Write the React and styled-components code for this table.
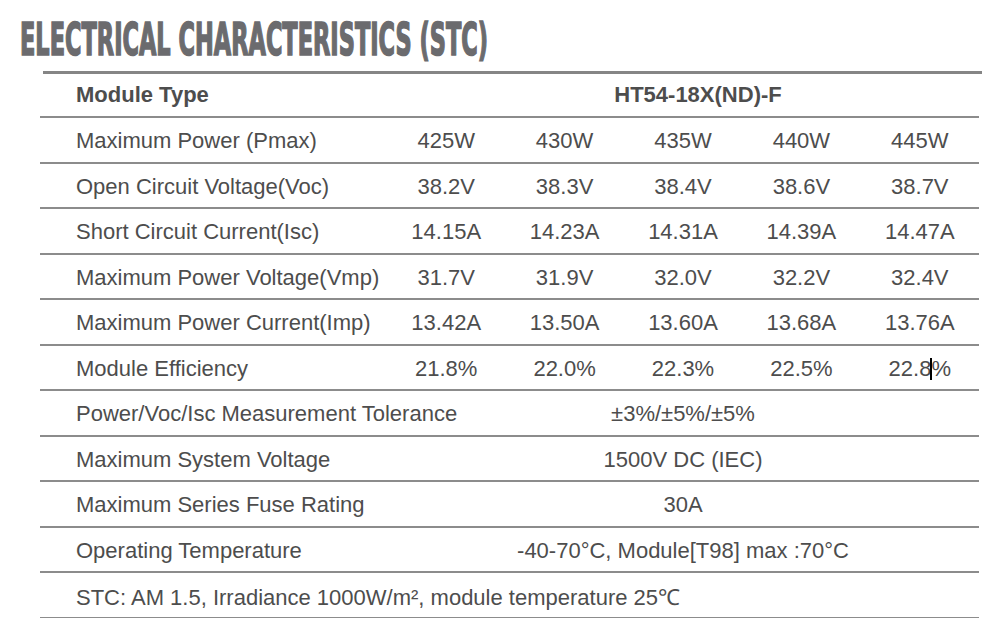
import React from "react";
import styled, { createGlobalStyle } from "styled-components";

const GlobalStyle = createGlobalStyle`
  body {
    margin: 0;
    background: #ffffff;
    font-family: "Liberation Sans", Arial, sans-serif;
  }
`;

const Page = styled.div`
  width: 1008px;
  height: 618px;
  overflow: hidden;
  background: #fff;
`;

const TitleBar = styled.div`
  height: 44px;
  padding: 17px 0 0 20px;
`;

const Title = styled.h1`
  margin: 0;
  display: inline-block;
  font-family: "DejaVu Sans Condensed", "DejaVu Sans", sans-serif;
  font-stretch: condensed;
  font-weight: 700;
  font-size: 45px;
  line-height: 1;
  color: #6b6b6e;
  -webkit-text-stroke: 1.6px #6b6b6e;
  white-space: nowrap;
  transform: scaleX(${(p) => p.$scale});
  transform-origin: left top;
`;

const TopRule = styled.div`
  margin: 10px 0 0 43px;
  width: 939px;
  height: 3px;
  background: #858585;
`;

const Table = styled.div`
  margin-left: 40px;
  width: 939px;
  color: #4d4d4d;
  font-size: 22px;
`;

const Row = styled.div`
  display: grid;
  grid-template-columns: 347px repeat(5, 1fr);
  align-items: center;
  box-sizing: border-box;
  height: ${(p) => (p.$head ? "44px" : "45.5px")};
  padding-top: ${(p) => (p.$head ? "0" : "3px")};
  border-bottom: 2px solid #8c8c8c;
  font-weight: ${(p) => (p.$head ? 700 : 400)};
`;

const Label = styled.div`
  padding-left: 36px;
  white-space: nowrap;
`;

const Cell = styled.div`
  text-align: center;
  white-space: nowrap;
  ${(p) => p.$span && `grid-column: 2 / -1;`}
  ${(p) => p.$shift && `padding-left: ${p.$shift}px;`}
`;

const Note = styled.div`
  grid-column: 1 / -1;
  padding-left: 36px;
  white-space: nowrap;
`;

const Caret = styled.span`
  display: inline-block;
  width: 2px;
  height: 22px;
  margin: 0 -1px;
  background: #000;
  vertical-align: -4px;
`;

const powerRows = [
  ["Maximum Power (Pmax)", ["425W", "430W", "435W", "440W", "445W"]],
  ["Open Circuit Voltage(Voc)", ["38.2V", "38.3V", "38.4V", "38.6V", "38.7V"]],
  ["Short Circuit Current(Isc)", ["14.15A", "14.23A", "14.31A", "14.39A", "14.47A"]],
  ["Maximum Power Voltage(Vmp)", ["31.7V", "31.9V", "32.0V", "32.2V", "32.4V"]],
  ["Maximum Power Current(Imp)", ["13.42A", "13.50A", "13.60A", "13.68A", "13.76A"]],
];

const sharedRows = [
  ["Power/Voc/Isc Measurement Tolerance", "±3%/±5%/±5%"],
  ["Maximum System Voltage", "1500V DC (IEC)"],
  ["Maximum Series Fuse Rating", "30A"],
  ["Operating Temperature", "-40-70°C, Module[T98] max :70°C"],
];

const App = () => {
  return (
    <Page>
      <GlobalStyle />
      <TitleBar>
        <Title $scale={0.555}>ELECTRICAL CHARACTERISTICS (STC)</Title>
      </TitleBar>
      <TopRule />
      <Table>
        <Row $head>
          <Label>Module Type</Label>
          <Cell $span $shift={30}>
            HT54-18X(ND)-F
          </Cell>
        </Row>
        {powerRows.map(([label, values]) => (
          <Row key={label}>
            <Label>{label}</Label>
            {values.map((v, i) => (
              <Cell key={i}>{v}</Cell>
            ))}
          </Row>
        ))}
        <Row>
          <Label>Module Efficiency</Label>
          <Cell>21.8%</Cell>
          <Cell>22.0%</Cell>
          <Cell>22.3%</Cell>
          <Cell>22.5%</Cell>
          <Cell>
            22.8
            <Caret />%
          </Cell>
        </Row>
        {sharedRows.map(([label, value]) => (
          <Row key={label}>
            <Label>{label}</Label>
            <Cell $span>{value}</Cell>
          </Row>
        ))}
        <Row>
          <Note>STC: AM 1.5, Irradiance 1000W/m², module temperature 25℃</Note>
        </Row>
      </Table>
    </Page>
  );
};

export default App;
